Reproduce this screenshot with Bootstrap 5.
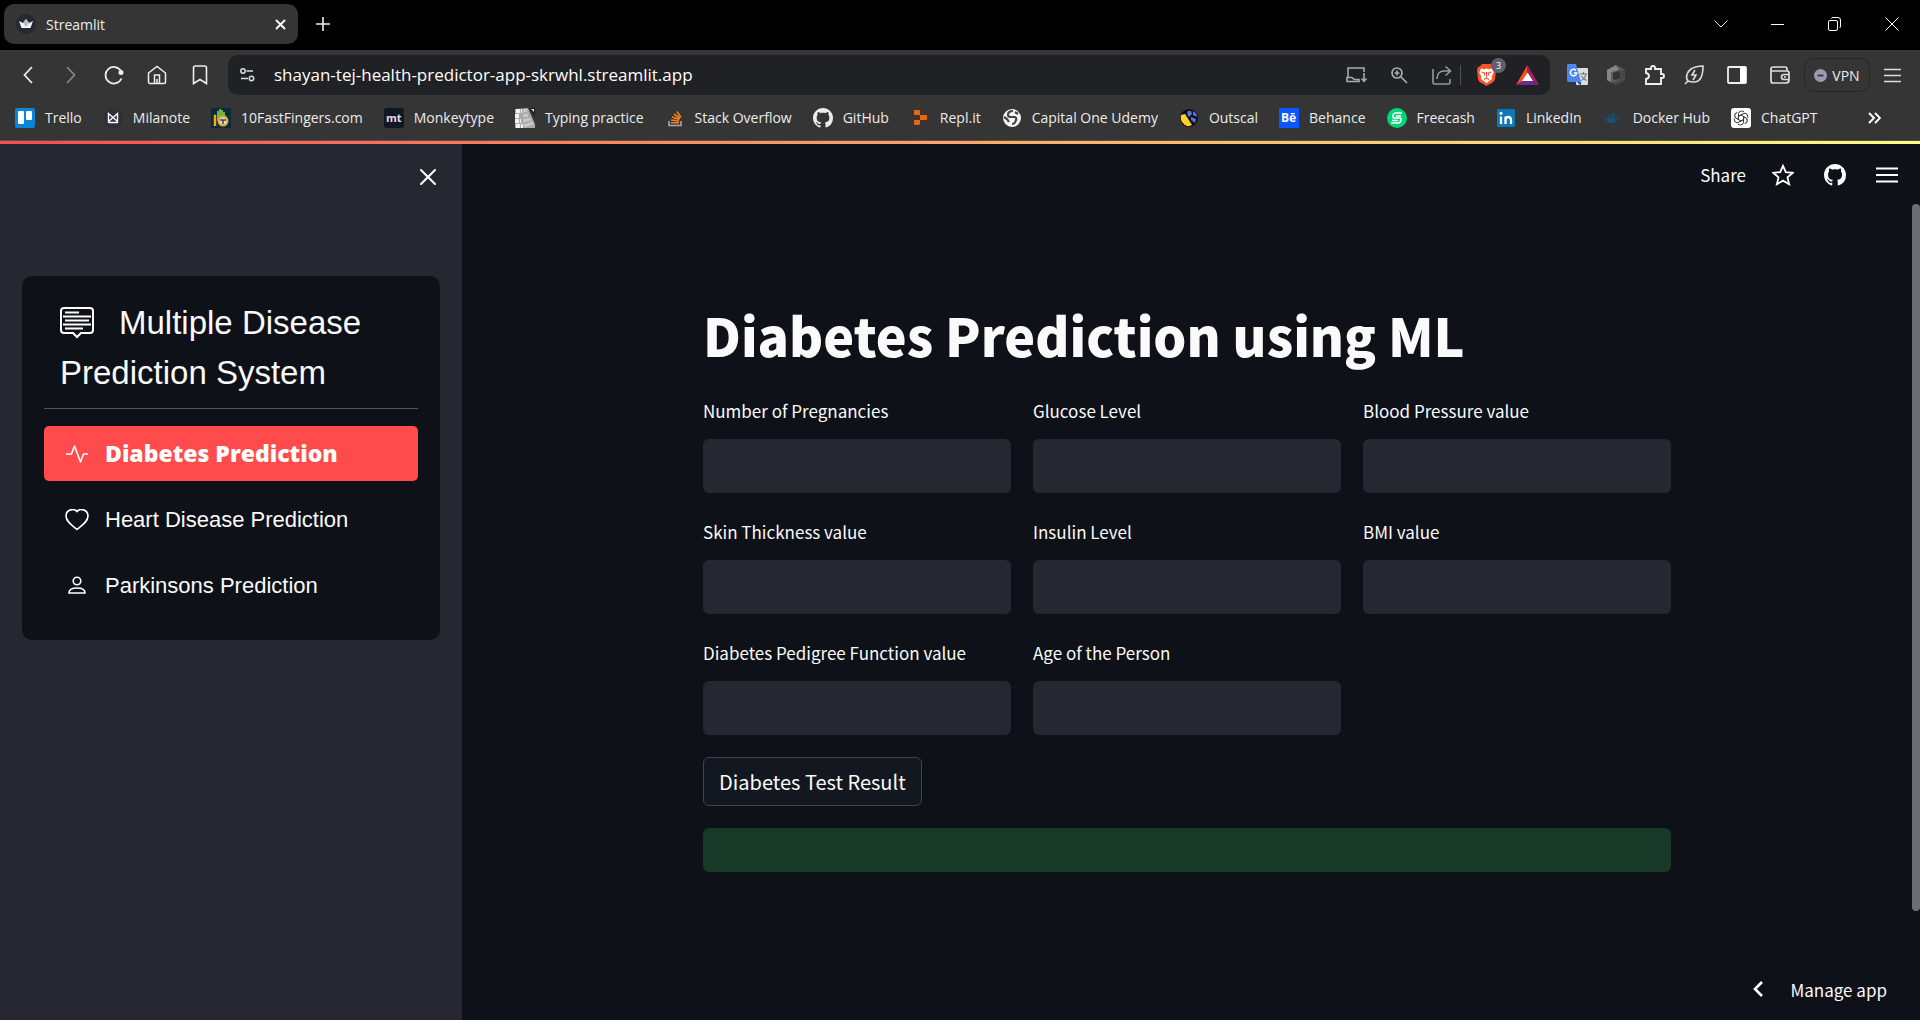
<!DOCTYPE html>
<html lang="en">
<head>
<meta charset="utf-8">
<meta name="viewport" content="width=device-width, initial-scale=1">
<title>Streamlit</title>
<link href="https://cdn.jsdelivr.net/npm/bootstrap@5.3.0/dist/css/bootstrap.min.css" rel="stylesheet">
<style>
:root{--ui:"Open Sans","Noto Sans",sans-serif;--app:"Noto Sans CJK SC","Noto Sans",sans-serif;--side:"Liberation Sans",Arial,sans-serif}
body{background:#0e1117;color:#fafafa;font-family:var(--app);overflow:hidden}
svg{display:block;flex:none}
button{color:inherit}
.ico-btn{border:0;background:none;padding:0;display:flex;align-items:center;justify-content:center;flex:none}
.browser-ui{font-family:var(--ui);color:#ececec;font-size:14px}
.tab-strip{background:#000;height:50px;padding:4px 0 6px 4px}
.page-tab{background:#353535;border-radius:10px;width:294px;height:40px;padding:0 12px}
.tab-name{margin-left:10px}
.new-tab{margin-left:18px}
.win-ctl{width:57px;height:40px}
.chrome-bar{background:#353535}
.tool-row{height:50px;padding:5px 19px 5px 6px}
.nav-ico{width:43px;height:40px}
.addr{background:#202124;border-radius:10px;height:40px;padding:0 11px 0 10px;margin-left:7px}
.addr input{background:none;border:0;outline:0;color:#fff;font-size:17px;padding:0;min-width:0}
.addr .vr{height:20px;align-self:center}
.ext-row{gap:19px;margin-left:17px}
.end-group{gap:14px}
.badge-num{position:absolute;left:14px;top:-6px;width:15px;height:15px;border-radius:8px;background:#5d6070;font-size:9px;line-height:15px;text-align:center;color:#fff}
.vpn{border:1px solid #272727;border-radius:10px;height:34px;width:66px;gap:5px;font-size:14px}
.marks{height:41px;padding:1px 39px 5px 15px;gap:21px;border-bottom:1px solid #4c5054}
.mark-link{color:#ececec;text-decoration:none;gap:10px;white-space:nowrap;flex:none;font-size:14px;line-height:20px}
.deco{height:3px;background:linear-gradient(90deg,#ff4b4b,#ffa766 50%,#fffd80)}
.side{background:#262730;width:462px;flex:none;padding:18px 22px 22px}
.side-close{width:24px;height:30px;margin-bottom:84px}
.menu-card{background:#0e1117;border-radius:10px;padding:22px 22px 27px;font-family:var(--side)}
.menu-title{font-size:33px;line-height:50px;font-weight:400;padding:0 16px;margin:0}
.menu-title svg{display:inline-block;vertical-align:-5px;margin-right:25px}
.menu-rule{border:0;border-top:1px solid #a3a8b4;opacity:.45;margin:10px 0 17px}
.menu-item{color:#fafafa;text-decoration:none;height:55px;border-radius:5px;padding:0 21px;gap:16px;font-size:22px;white-space:nowrap}
.menu-item.current{background:#ff4b4b;color:#fff;font-family:"Open Sans",var(--side);font-weight:800;font-size:23px}
.menu-list{gap:11px}
.top-tools{height:60px;padding:2px 14px 0 0;gap:26px}
.share-btn{font-size:17px;line-height:24px;border:0;background:none;padding:0}
.scroller{width:8px;padding:60px 0 109px}
.scroller div{background:#6d6e72;border-radius:4px}
.content-col{max-width:968px;width:100%;margin:0 auto;padding-top:94px}
.page-title{font-weight:900;font-size:52px;line-height:74px;margin:0 0 22px;color:#fafafa;white-space:nowrap}
.form-grid{display:grid;grid-template-columns:repeat(3,1fr);gap:22px}
.form-grid label{display:block;font-size:17px;line-height:34px;margin-bottom:11px}
.field{background:#262730;border:0;border-radius:6px;height:54px;width:100%;color:#fafafa;padding:0 12px}
.result-btn{background:#13171f;border:1px solid #41444c;border-radius:6px;height:49px;padding:0 15px;font-size:20px;line-height:30px;margin:22px 0}
.result-box{background:#173928;border-radius:6px;height:44px}
.manage{position:absolute;right:25px;bottom:18px;border:0;background:none;padding:0;gap:27px;font-size:17px}
</style>
</head>
<body class="vh-100 d-flex flex-column">
<svg width="0" height="0" class="position-absolute">
<symbol id="gh" viewBox="0 0 16 16"><path fill="currentColor" d="M8 0C3.58 0 0 3.58 0 8c0 3.54 2.29 6.53 5.47 7.59.4.07.55-.17.55-.38 0-.19-.01-.82-.01-1.49-2.01.37-2.53-.49-2.69-.94-.09-.23-.48-.94-.82-1.13-.28-.15-.68-.52-.01-.53.63-.01 1.08.58 1.23.82.72 1.21 1.87.87 2.33.66.07-.52.28-.87.51-1.07-1.78-.2-3.64-.89-3.64-3.95 0-.87.31-1.59.82-2.15-.08-.2-.36-1.02.08-2.12 0 0 .67-.21 2.2.82.64-.18 1.32-.27 2-.27s1.36.09 2 .27c1.53-1.04 2.2-.82 2.2-.82.44 1.1.16 1.92.08 2.12.51.56.82 1.27.82 2.15 0 3.07-1.87 3.75-3.65 3.95.29.25.54.73.54 1.48 0 1.07-.01 1.93-.01 2.2 0 .21.15.46.55.38A8.01 8.01 0 0 0 16 8c0-4.42-3.58-8-8-8z"/></symbol>
</svg>

<header class="browser-ui flex-shrink-0">
  <div class="tab-strip d-flex align-items-center">
    <div class="page-tab d-flex align-items-center">
      <svg width="20" height="20" viewBox="0 0 20 20"><circle cx="10" cy="10" r="10" fill="#262730"/><path d="M3 7l4 2 3-4 3 4 4-2-2.500 7h-9z" fill="#f2f2f2"/><path d="M7 9l3-4 3 4-3 4z" fill="#bdbdbd"/></svg>
      <span class="tab-name flex-grow-1">Streamlit</span>
      <button class="ico-btn" aria-label="Close tab"><svg width="11" height="11" viewBox="0 0 11 11"><path d="M1 1l9 9M10 1l-9 9" stroke="#fff" stroke-width="1.800"/></svg></button>
    </div>
    <button class="ico-btn new-tab" aria-label="New tab"><svg width="14" height="14" viewBox="0 0 14 14"><path d="M7 0v14M0 7h14" stroke="#eee" stroke-width="1.600"/></svg></button>
    <div class="d-flex ms-auto">
      <button class="ico-btn win-ctl" aria-label="Search tabs"><svg width="14" height="8" viewBox="0 0 14 8"><path d="M.5.5L7 7 13.500.5" fill="none" stroke="#ddd"/></svg></button>
      <button class="ico-btn win-ctl" aria-label="Minimize"><svg width="13" height="13"><path d="M0 6.500h13" stroke="#fff"/></svg></button>
      <button class="ico-btn win-ctl" aria-label="Restore"><svg width="13" height="14" fill="none" stroke="#fff"><rect x=".5" y="3.500" width="9" height="10" rx="1.500"/><path d="M3 1.500Q3.500.5 5 .5h5q2.500 0 2.500 2.500v6q0 1.500-1 2"/></svg></button>
      <button class="ico-btn win-ctl" aria-label="Close window"><svg width="14" height="14" viewBox="0 0 14 14"><path d="M.5.5l13 13M13.500.5l-13 13" stroke="#fff"/></svg></button>
    </div>
  </div>

  <div class="chrome-bar">
    <div class="tool-row d-flex align-items-center">
      <button class="ico-btn nav-ico" aria-label="Back"><svg width="10" height="18" fill="none" stroke="#eee" stroke-width="1.800"><path d="M9 1L1.500 9 9 17"/></svg></button>
      <button class="ico-btn nav-ico" aria-label="Forward"><svg width="10" height="18" fill="none" stroke="#858585" stroke-width="1.800"><path d="M1 1l7.500 8L1 17"/></svg></button>
      <button class="ico-btn nav-ico" aria-label="Reload"><svg width="20" height="20" fill="none" stroke="#eee" stroke-width="1.800"><path d="M17 6a8.300 8.300 0 1 0 .5 7.500"/><circle cx="17" cy="7.500" r="1.600" fill="#eee"/></svg></button>
      <button class="ico-btn nav-ico" aria-label="Home"><svg width="20" height="20" fill="none" stroke="#eee" stroke-width="1.500"><path d="M1.500 8L10 1.500 18.500 8v9q0 1.500-1.500 1.500H3q-1.500 0-1.500-1.500zM7.500 18v-8h5v8M10 18v-4"/></svg></button>
      <button class="ico-btn nav-ico" aria-label="Bookmark"><svg width="16" height="20" fill="none" stroke="#eee" stroke-width="1.600"><path d="M1.500 18.500V3q0-2 2-2h9q2 0 2 2v15.500L8 14.500z"/></svg></button>
      <div class="addr d-flex align-items-center flex-grow-1">
        <svg width="20" height="16" fill="none" stroke="#ddd" stroke-width="1.500" class="me-3"><circle cx="5" cy="4" r="2.200"/><path d="M8.500 4H15M3 11.500h7"/><circle cx="13.500" cy="11.500" r="2.200"/></svg>
        <input class="flex-grow-1" type="text" aria-label="Address" value="shayan-tej-health-predictor-app-skrwhl.streamlit.app">
        <div class="d-flex align-items-center">
          <button class="ico-btn me-4" aria-label="Install app"><svg width="21" height="16" fill="none" stroke="#aaa" stroke-width="1.600"><path d="M2 10V1h16v4M1 14.500V10.500h5l2 2h5v2zM18 6v8M15.500 11.500L18 14.200l2.500-2.700"/></svg></button>
          <button class="ico-btn me-4" aria-label="Zoom"><svg width="17" height="17" fill="none" stroke="#aaa" stroke-width="1.700"><circle cx="6" cy="6" r="5"/><path d="M10 10l6 6M3.500 6h5M6 3.500v5"/></svg></button>
          <button class="ico-btn me-2" aria-label="Share page"><svg width="20" height="20" fill="none" stroke="#999" stroke-width="1.600"><path d="M1 4v13.500q0 1.500 1.500 1.500h14q1.500 0 1.500-1.500V14M5 14c0-5 3-8 7-8h6M13.500 1.500L18.500 6l-5 4.500"/></svg></button>
          <span class="vr"></span>
          <button class="ico-btn position-relative ms-3" aria-label="Brave shields"><svg width="19" height="22" viewBox="0 0 19 22"><path d="M5 0h9l2 2.500 2 .5 1 3-1 9q-.5 2-2.500 3.500L9.500 22l-6-3.500Q1.500 17 1 15L0 6l1-3 2-.5z" fill="#fb542b"/><path d="M4 4.500l3 .7 2.500-.7 2.500.7 3-.7 1.700 4-2.200 4.500.5 2-5.500 4-5.500-4 .5-2-2.200-4.500z" fill="#fff"/><path d="M4.500 8l3.500 1.200-1 2.300M14.500 8L11 9.200l1 2.300M9.500 8v5M7 15.500l2.500-1.500 2.500 1.500" fill="none" stroke="#fb542b" stroke-width="1.100"/></svg><span class="badge-num">3</span></button>
          <button class="ico-btn ms-3 ps-1" aria-label="Brave rewards"><svg width="23" height="20" viewBox="0 0 23 20"><path d="M11.500 0L0 20l7-4 4.500-8z" fill="#ff4724"/><path d="M11.500 0L23 20l-7-4-4.500-8z" fill="#9e1f63"/><path d="M0 20h23l-7-4H7z" fill="#662d91"/><path d="M11.500 7.500L17 16H6z" fill="#fff"/></svg></button>
        </div>
      </div>
      <div class="ext-row d-flex align-items-center">
        <button class="ico-btn" aria-label="Translate"><svg width="21" height="22"><rect x="9" y="4" width="12" height="17" rx="1" fill="#ddd"/><path d="M12.500 10h7.500M16.500 8v2M19 10q-1 5-5 6.500M14.500 12q1.500 3 5 4.500" stroke="#678" stroke-width="1.100" fill="none"/><path d="M1 0h8l5 18H2q-2 0-2-2V1z" fill="#4a86ee"/><path d="M10 18h4v4z" fill="#1a52c4"/><path d="M9 6.500a3.200 3.200 0 1 0 .7 2.500H6.800" fill="none" stroke="#fff" stroke-width="1.500"/></svg></button>
        <button class="ico-btn" aria-label="Extension"><svg width="18" height="20" viewBox="0 0 18 20"><path d="M9 0l9 5v10l-9 5-9-5V5z" fill="#5c5c5c"/><path d="M9 0L0 5v10l4 2V7l8-2z" fill="#858585"/><path d="M18 5v10l-9 5-3-2 6-3V5z" fill="#484848"/><path d="M6 8l5-2 2 2v5l-4 2-3-1z" fill="#353535"/></svg></button>
        <button class="ico-btn" aria-label="Extensions"><svg width="21" height="20" fill="none" stroke="#eee" stroke-width="1.900"><path d="M2 4h5V3q0-2 2-2t2 2v1h6v5h1q2 0 2 2t-2 2h-1v6H2v-5q3-.5 3-3t-3-3z"/></svg></button>
        <button class="ico-btn" aria-label="Leo"><svg width="20" height="20" fill="none" stroke="#ddd" stroke-width="1.600"><path d="M1 19l3-3c-3-4-1-9 3-12q5-3 12-3c0 8-2 16-9 16q-4 0-6-1M11 5l-3 5h4l-3 5"/></svg></button>
        <button class="ico-btn ms-1" aria-label="Sidebar"><svg width="20" height="18"><rect x="1" y="1" width="18" height="16" rx="1" fill="none" stroke="#eee" stroke-width="1.800"/><path d="M13 1h6v16h-6z" fill="#fff"/></svg></button>
        <div class="end-group d-flex align-items-center ms-1">
          <button class="ico-btn" aria-label="Wallet"><svg width="20" height="18" fill="none" stroke="#ddd" stroke-width="1.700"><path d="M17 5V3q0-2-2-2H3Q1 1 1 3v12q0 2 2 2h13q3 0 3-3V7q0-2-2-2H1M19 8.500h-5q-2.500 0-2.500 2.500t2.500 2.500h5M14 11h2"/></svg></button>
          <button class="ico-btn vpn"><svg width="13" height="13"><circle cx="6.500" cy="6.500" r="6.500" fill="#9a9bb0"/><path d="M3.500 6.500h6" stroke="#353535" stroke-width="1.800"/></svg>VPN</button>
          <button class="ico-btn" aria-label="Menu"><svg width="17" height="15"><path d="M0 1.500h17M0 7.500h17M0 13.500h17" stroke="#ddd" stroke-width="1.500"/></svg></button>
        </div>
      </div>
    </div>

    <nav class="marks d-flex align-items-center" aria-label="Bookmarks">
      <a href="#" class="mark-link d-flex align-items-center"><svg width="20" height="20"><rect width="20" height="20" rx="2" fill="#0a84d8"/><rect x="3" y="3" width="6" height="13" rx="1" fill="#fff"/><rect x="11" y="3" width="6" height="9" rx="1" fill="#fff"/></svg>Trello</a>
      <a href="#" class="mark-link d-flex align-items-center"><svg width="20" height="20"><circle cx="10" cy="10" r="10" fill="#2f2e3b"/><path d="M5.500 14.500v-9l9 8v-8l-9 8M5.500 14.500h9v-1" fill="none" stroke="#fff" stroke-width="1.400"/></svg>Milanote</a>
      <a href="#" class="mark-link d-flex align-items-center"><svg width="20" height="20"><path d="M0 0h20v20H0z" fill="#0b2b3c"/><path d="M6 8V3h2v3-5h2v4-3h2v4-2h2v3l2 2v4H6z" fill="#6cb33f"/><path d="M4 7v11M3 8h2" stroke="#f6a81c" stroke-width="2.500"/><circle cx="12" cy="13" r="4.500" fill="#ddd" stroke="#f0a51c" stroke-width="2"/><path d="M9 12h6M12 12v4" stroke="#345" stroke-width="1.500"/></svg>10FastFingers.com</a>
      <a href="#" class="mark-link d-flex align-items-center"><svg width="20" height="20"><rect width="20" height="20" rx="3" fill="#111820"/><text x="2" y="14" font-family="Open Sans" font-size="11" font-weight="700" fill="#eadcf0">mt</text></svg>Monkeytype</a>
      <a href="#" class="mark-link d-flex align-items-center"><svg width="20" height="20"><path d="M0 1l13-1 7 16v4H0z" fill="#a9a9a9"/><path d="M1 3h6M0 8h5M0 13h6M1 18h7" stroke="#f1f1f1" stroke-width="4" stroke-dasharray="4 1"/><path d="M8 3l4-1M8 8l5-1M8 13l8-2M9 18l9-3" stroke="#c8c8c8" stroke-width="3"/><path d="M14 0h6v9z" fill="#222"/><path d="M16 1h3v3z" fill="#ddd"/></svg>Typing practice</a>
      <a href="#" class="mark-link d-flex align-items-center"><svg width="20" height="20" fill="none"><path d="M4 13v4.500h12V13" stroke="#aaa" stroke-width="1.600"/><path d="M6 14.800h8M6 12l8 1M7 9l7.500 2.500M9 6l6 4.500M12 3.500l4 6" stroke="#f48024" stroke-width="1.600"/></svg>Stack Overflow</a>
      <a href="#" class="mark-link d-flex align-items-center"><svg width="20" height="20"><use href="#gh"/></svg>GitHub</a>
      <a href="#" class="mark-link d-flex align-items-center"><svg width="20" height="20"><path d="M4 2h5q1 0 1 1v4h6q1 0 1 1v3q0 1-1 1h-6v4q0 1-1 1H5q-1 0-1-1v-4h6V7H5Q4 7 4 6z" fill="#f26207"/></svg>Repl.it</a>
      <a href="#" class="mark-link d-flex align-items-center"><svg width="20" height="20"><circle cx="10" cy="10" r="9" fill="#f5f5f5"/><path d="M11 3Q6 3 6 7q0 2 3 2h3q3 0 2 3-1 4-4 4M2 9l3 2 2 3M13 4l3 2" fill="none" stroke="#444" stroke-width="2.200"/></svg>Capital One Udemy</a>
      <a href="#" class="mark-link d-flex align-items-center"><svg width="20" height="20"><circle cx="10" cy="10" r="9" fill="#111"/><path d="M2 7l4-1 7 11q-6 3-9-2Q1 12 2 7z" fill="#fbd32b"/><path d="M9 3l3 0 1 3-3 3-2-3zM14 3q4 2 4 6l-4-2zM12 9l5 2-1 4-4-3z" fill="#5275e8"/></svg>Outscal</a>
      <a href="#" class="mark-link d-flex align-items-center"><svg width="20" height="20"><path d="M0 0h20v20H0z" fill="#0a57ff"/><text x="2" y="14" font-family="Open Sans" font-size="12" font-weight="700" fill="#fff">Bē</text></svg>Behance</a>
      <a href="#" class="mark-link d-flex align-items-center"><svg width="20" height="20"><circle cx="10" cy="10" r="10" fill="#01d676"/><path d="M15 5H9Q6 5 6 8t3 2h5M14 8H9M14 10q0 5-3 5H4M11 12.500H5" fill="none" stroke="#fff" stroke-width="1.700"/></svg>Freecash</a>
      <a href="#" class="mark-link d-flex align-items-center"><svg width="20" height="20"><rect x="1" y="1" width="18" height="18" rx="1" fill="#0a78b8"/><path d="M5 8.500V16M9.500 16V8.500M9.500 12q0-3 2.700-3T15 12v4" fill="none" stroke="#fff" stroke-width="2.300"/><circle cx="5" cy="5.200" r="1.500" fill="#fff"/></svg>LinkedIn</a>
      <a href="#" class="mark-link d-flex align-items-center"><svg width="20" height="20"><circle cx="10" cy="10" r="9" fill="none" stroke="#254252"/><path d="M3 10h11l2-2 1 2q-2 1-3 1-2 5-7 4-4 0-4-5z" fill="#1b4f74"/><path d="M5 8.500h7M8 6.500h4M10 4.500h2" stroke="#1b4f74" stroke-width="1.600"/></svg>Docker Hub</a>
      <a href="#" class="mark-link d-flex align-items-center"><svg width="20" height="20"><rect width="20" height="20" rx="3" fill="#fff"/><g fill="none" stroke="#333"><g id="petal"><path d="M7.500 8.500v-3q.5-2.500 3-2.500 1.500 0 2.500 1M10 7l3.500 2"/></g><use href="#petal" transform="rotate(60 10 10)"/><use href="#petal" transform="rotate(120 10 10)"/><use href="#petal" transform="rotate(180 10 10)"/><use href="#petal" transform="rotate(240 10 10)"/><use href="#petal" transform="rotate(300 10 10)"/></g></svg>ChatGPT</a>
      <button class="ico-btn ms-auto" aria-label="More bookmarks"><svg width="13" height="12" fill="none" stroke="#fff" stroke-width="1.900"><path d="M1 1l5 5-5 5M7 1l5 5-5 5"/></svg></button>
    </nav>
  </div>
</header>
<div class="deco flex-shrink-0"></div>

<div class="d-flex flex-grow-1">
  <aside class="side">
    <button class="ico-btn side-close ms-auto" aria-label="Close sidebar"><svg width="16" height="16" viewBox="0 0 16 16"><path d="M1 1l14 14M15 1L1 15" stroke="#fff" stroke-width="2" stroke-linecap="round"/></svg></button>
    <div class="menu-card">
      <h2 class="menu-title"><svg width="34" height="32" viewBox="0 0 34 32" fill="none" stroke="#fff" stroke-width="2"><path d="M4 1h26q3 0 3 3v19q0 3-3 3h-9l-4 4-4-4H4q-3 0-3-3V4q0-3 3-3z"/><path d="M5 5.500h14M3 9.500h28M5 13.500h24M3 17.500h28M5 21.500h18"/></svg>Multiple Disease Prediction System</h2>
      <hr class="menu-rule">
      <nav class="menu-list d-flex flex-column">
        <a href="#" class="menu-item current d-flex align-items-center" aria-current="page"><svg width="24" height="22" fill="none" stroke="#fff" stroke-width="1.600" stroke-linejoin="round"><path d="M1 11h5.500L9.500 3l6 16 3-8H23"/></svg>Diabetes Prediction</a>
        <a href="#" class="menu-item d-flex align-items-center"><svg width="24" height="22" fill="none" stroke="#fff" stroke-width="1.600"><path d="M12 2.500C9.500-.8 1 0 1 7c0 5.500 6 9.500 11 13.500 5-4 11-8 11-13.500C23 0 14.500-.8 12 2.500z"/></svg>Heart Disease Prediction</a>
        <a href="#" class="menu-item d-flex align-items-center"><svg width="24" height="22" fill="none" stroke="#fff" stroke-width="1.600"><circle cx="12" cy="6" r="3.800"/><path d="M4 18q0-5 8-5t8 5z"/></svg>Parkinsons Prediction</a>
      </nav>
    </div>
  </aside>

  <main class="flex-grow-1 position-relative">
    <div class="top-tools d-flex justify-content-end align-items-center">
      <button class="share-btn">Share</button>
      <button class="ico-btn" aria-label="Favorite"><svg width="22" height="22" viewBox="0 0 22 22"><path d="M11 1.800l2.800 6.400 7 .6-5.300 4.600 1.600 6.800L11 16.600l-6.100 3.600 1.600-6.800L1.200 8.800l7-.6z" fill="none" stroke="#fff" stroke-width="1.800"/></svg></button>
      <button class="ico-btn ms-1" aria-label="View on GitHub"><svg width="22" height="22"><use href="#gh"/></svg></button>
      <button class="ico-btn ms-1" aria-label="App menu"><svg width="22" height="16"><path d="M0 1.500h22M0 8h22M0 14.500h22" stroke="#fff" stroke-width="2.200"/></svg></button>
    </div>
    <form class="content-col" onsubmit="return false">
      <h1 class="page-title">Diabetes Prediction using ML</h1>
      <div class="form-grid">
        <div><label for="f1">Number of Pregnancies</label><input class="field" id="f1" type="text"></div>
        <div><label for="f2">Glucose Level</label><input class="field" id="f2" type="text"></div>
        <div><label for="f3">Blood Pressure value</label><input class="field" id="f3" type="text"></div>
        <div><label for="f4">Skin Thickness value</label><input class="field" id="f4" type="text"></div>
        <div><label for="f5">Insulin Level</label><input class="field" id="f5" type="text"></div>
        <div><label for="f6">BMI value</label><input class="field" id="f6" type="text"></div>
        <div><label for="f7">Diabetes Pedigree Function value</label><input class="field" id="f7" type="text"></div>
        <div><label for="f8">Age of the Person</label><input class="field" id="f8" type="text"></div>
      </div>
      <button class="result-btn" type="submit">Diabetes Test Result</button>
      <div class="result-box" role="status"></div>
    </form>
    <button class="manage d-flex align-items-center"><svg width="10" height="16" fill="none" stroke="#fff" stroke-width="2.600"><path d="M9 1L2 8l7 7"/></svg>Manage app</button>
  </main>
  <div class="scroller d-flex"><div class="w-100"></div></div>
</div>
<script src="https://cdn.jsdelivr.net/npm/bootstrap@5.3.0/dist/js/bootstrap.bundle.min.js"></script>
</body>
</html>
